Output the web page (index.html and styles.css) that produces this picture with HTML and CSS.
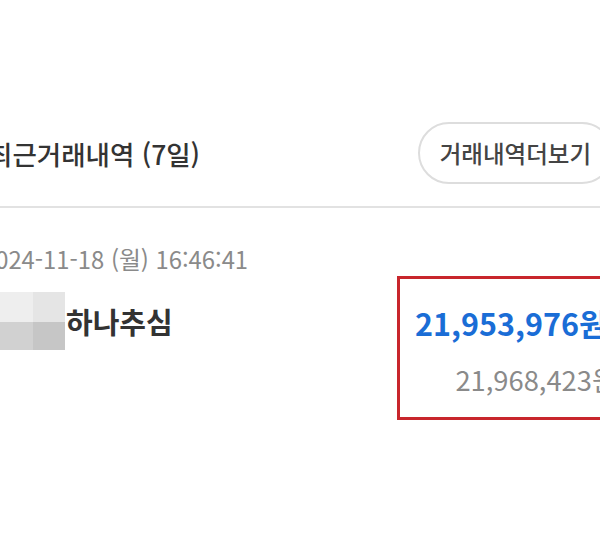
FILE: index.html
```html
<!DOCTYPE html>
<html lang="ko">
<head>
<meta charset="utf-8">
<link rel="stylesheet" href="styles.css">
</head>
<body>
<div class="page">
  <div class="header">
    <h2 class="title">최근거래내역 (7일)</h2>
    <button class="more-btn">거래내역더보기</button>
  </div>
  <div class="tx">
    <div class="tx-date">2024-11-18 (월) 16:46:41</div>
    <div class="tx-body">
      <div class="tx-name-row">
        <div class="mosaic">
          <span class="m1"></span><span class="m2"></span>
          <span class="m3"></span><span class="m4"></span>
        </div>
        <span class="tx-name">하나추심</span>
      </div>
      <div class="amount-box">
        <div class="amount">21,953,976원</div>
        <div class="balance">21,968,423원</div>
      </div>
    </div>
  </div>
</div>
</body>
</html>
```

FILE: styles.css
```css
html, body {
  margin: 0;
  padding: 0;
  background: #ffffff;
  overflow: hidden;
}
body {
  width: 600px;
  height: 549px;
  font-family: "Noto Sans CJK KR", "Noto Sans", sans-serif;
}
.page {
  width: 650px;
  margin-left: -14px;
}
.header {
  display: flex;
  justify-content: space-between;
  align-items: center;
  padding: 122px 23px 22px 2px;
  border-bottom: 2px solid #e2e2e2;
}
.title {
  margin: 0;
  font-size: 26.5px;
  font-weight: 500;
  color: #333333;
}
.more-btn {
  height: 62px;
  padding: 0 20px;
  border: 2px solid #dddddd;
  border-radius: 31px;
  background: #ffffff;
  font-family: inherit;
  font-size: 23.5px;
  font-weight: 500;
  color: #444444;
}
.tx {
  padding: 36px 0 0 0;
}
.tx-date {
  margin-left: -4px;
  font-size: 23.8px;
  color: #8a8a8a;
  line-height: 30px;
}
.tx-body {
  display: flex;
  justify-content: space-between;
  align-items: flex-start;
  margin-top: 2px;
}
.tx-name-row {
  display: flex;
  align-items: center;
  margin-top: 16px;
}
.mosaic {
  display: grid;
  grid-template-columns: 47px 32px;
  grid-template-rows: 30px 28px;
}
.m1 { background: #eeeeee; }
.m2 { background: #e5e5e5; }
.m3 { background: #d1d1d1; }
.m4 { background: #c6c6c6; }
.tx-name {
  font-size: 29px;
  font-weight: 700;
  color: #333333;
  margin-left: 1px;
}
.amount-box {
  width: 239px;
  min-height: 144px;
  box-sizing: border-box;
  border: 3px solid #c8262c;
  padding: 25px 16px 20px 0;
  text-align: right;
  white-space: nowrap;
}
.amount {
  margin-right: 10px;
  font-size: 30.5px;
  font-weight: 700;
  color: #1a6dd6;
  line-height: 38px;
}
.balance {
  margin-top: 19px;
  font-size: 27.3px;
  color: #8a8a8a;
  line-height: 36px;
}
```
